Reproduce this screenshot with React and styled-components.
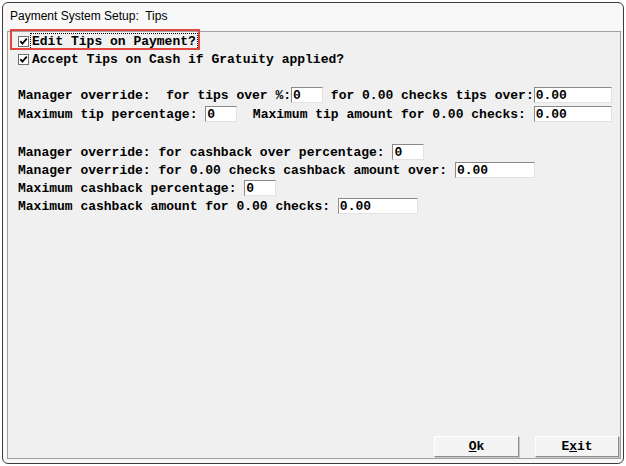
import React from "react";
import styled, { createGlobalStyle } from "styled-components";

const Global = createGlobalStyle`
  html, body { margin: 0; padding: 0; background: #ffffff; }
  body { width: 626px; height: 466px; overflow: hidden; }
  * { box-sizing: border-box; }
`;

const mono = `"Liberation Mono", "DejaVu Sans Mono", monospace`;

const Window = styled.div`
  position: relative;
  margin: 2px 0 0 2px;
  width: 622px;
  height: 462px;
  border: 1px solid #3c3c3c;
  border-radius: 6px;
  background: #f8f8f8;
  display: flex;
  flex-direction: column;
`;

const TitleBar = styled.div`
  height: 28px;
  padding: 0 0 2px 7px;
  display: flex;
  align-items: center;
  font-family: "Liberation Sans", Arial, sans-serif;
  font-size: 12px;
  color: #000;
  white-space: pre;
`;

const Panel = styled.div`
  flex: 1;
  margin: 0 2px 4px 4px;
  border: 1px solid #a0a0a0;
  background: #f0f0f0;
  padding: 0 1px 1px 10px;
  display: flex;
  flex-direction: column;
  font-family: ${mono};
  font-weight: bold;
  font-size: 13px;
  color: #000;
`;

const Row = styled.div`
  height: 18px;
  display: flex;
  align-items: center;
  margin-top: ${(p) => p.$gap || 0}px;
`;

const Label = styled.span`
  white-space: pre;
  line-height: 15px;
`;

const FocusLabel = styled(Label)`
  outline: 1px dotted #000;
  outline-offset: 0;
  padding: 0 1px 0 1px;
  margin-left: -1px;
`;

const Check = styled.svg`
  width: 11px;
  height: 11px;
  margin-right: 3px;
  flex: none;
`;

const Field = styled.input`
  width: ${(p) => p.$w}px;
  height: 16px;
  flex: none;
  margin: 0;
  padding: 0 0 0 1px;
  border-style: solid;
  border-width: 1px;
  border-color: #8a8a8a #e2e2e2 #e2e2e2 #8a8a8a;
  background: #fff;
  font-family: ${mono};
  font-weight: bold;
  font-size: 13px;
  color: #000;
  outline: none;
`;

const Footer = styled.div`
  margin-top: auto;
  display: flex;
  justify-content: flex-end;
  gap: 16px;
`;

const Button = styled.button`
  width: ${(p) => p.$w}px;
  height: 21px;
  margin: 0;
  padding: 0;
  background: #f4f4f4;
  border-style: solid;
  border-width: 1px;
  border-color: #ffffff #8c8c8c #8c8c8c #ffffff;
  box-shadow: 1px 1px 0 #c8c8c8;
  font-family: ${mono};
  font-weight: bold;
  font-size: 13px;
  color: #000;
  display: flex;
  align-items: center;
  justify-content: center;
`;

const Annotation = styled.div`
  position: absolute;
  left: 7px;
  top: 26px;
  width: 190px;
  height: 21px;
  border: 2px solid #e4463f;
  pointer-events: none;
`;

const CheckBox = () => (
  <Check viewBox="0 0 11 11">
    <rect x="0.5" y="0.5" width="10" height="10" fill="#fff" stroke="#6f6f6f" />
    <path d="M2.3 5.2 L4.4 7.6 L8.8 2.6" fill="none" stroke="#000" strokeWidth="1.8" />
  </Check>
);

export default function App() {
  return (
    <>
      <Global />
      <Window>
        <TitleBar>Payment System Setup:  Tips</TitleBar>
        <Panel>
          <Row>
            <CheckBox />
            <FocusLabel>Edit Tips on Payment?</FocusLabel>
          </Row>
          <Row>
            <CheckBox />
            <Label>Accept Tips on Cash if Gratuity applied?</Label>
          </Row>

          <Row $gap={18}>
            <Label>Manager override:  for tips over %:</Label>
            <Field $w={32} defaultValue="0" readOnly />
            <Label> for 0.00 checks tips over:</Label>
            <Field $w={78} defaultValue="0.00" readOnly />
          </Row>
          <Row $gap={1}>
            <Label>Maximum tip percentage: </Label>
            <Field $w={32} defaultValue="0" readOnly />
            <Label>  Maximum tip amount for 0.00 checks: </Label>
            <Field $w={78} defaultValue="0.00" readOnly />
          </Row>

          <Row $gap={20}>
            <Label>Manager override: for cashback over percentage: </Label>
            <Field $w={32} defaultValue="0" readOnly />
          </Row>
          <Row>
            <Label>Manager override: for 0.00 checks cashback amount over: </Label>
            <Field $w={80} defaultValue="0.00" readOnly />
          </Row>
          <Row>
            <Label>Maximum cashback percentage: </Label>
            <Field $w={32} defaultValue="0" readOnly />
          </Row>
          <Row>
            <Label>Maximum cashback amount for 0.00 checks: </Label>
            <Field $w={80} defaultValue="0.00" readOnly />
          </Row>

          <Footer>
            <Button $w={85}>
              <u>O</u>k
            </Button>
            <Button $w={84}>
              E<u>x</u>it
            </Button>
          </Footer>
        </Panel>
        <Annotation />
      </Window>
    </>
  );
}
